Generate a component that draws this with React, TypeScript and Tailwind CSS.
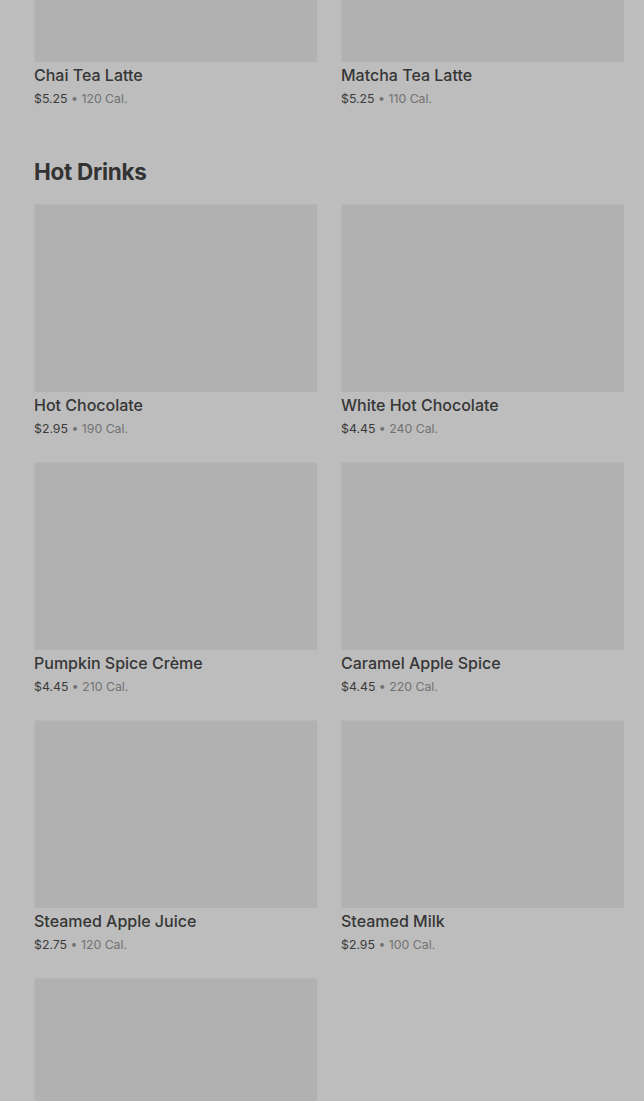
import React from "react";

type Item = { name: string; price: string; cal: string };

const top: Item[] = [
  { name: "Chai Tea Latte", price: "$5.25", cal: "120 Cal." },
  { name: "Matcha Tea Latte", price: "$5.25", cal: "110 Cal." },
];

const hot: Item[] = [
  { name: "Hot Chocolate", price: "$2.95", cal: "190 Cal." },
  { name: "White Hot Chocolate", price: "$4.45", cal: "240 Cal." },
  { name: "Pumpkin Spice Crème", price: "$4.45", cal: "210 Cal." },
  { name: "Caramel Apple Spice", price: "$4.45", cal: "220 Cal." },
  { name: "Steamed Apple Juice", price: "$2.75", cal: "120 Cal." },
  { name: "Steamed Milk", price: "$2.95", cal: "100 Cal." },
  { name: "Espresso", price: "$2.45", cal: "10 Cal." },
];

function Card({ item }: { item: Item }) {
  return (
    <div className="flex flex-col">
      <div className="h-[188px] bg-[#b1b1b1] border-t border-l border-[#b7b7b7]" />
      <div className="text-[16px] leading-[26px] font-medium text-[#363636] truncate">{item.name}</div>
      <div className="mt-[1px] text-[12.3px] leading-5 text-[#3b3b3b]">
        {item.price}
        <span className="text-[#727272]"> • {item.cal}</span>
      </div>
    </div>
  );
}

export default function App() {
  return (
    <div
      className="min-h-[1101px] bg-[#bdbdbd] pl-[34px] pr-[20px] pb-10"
      style={{ fontFamily: "Inter, 'Noto Sans', sans-serif" }}
    >
      <div className="-mt-[126px] grid grid-cols-2 gap-x-6 gap-y-[23px]">
        {top.map((it) => (
          <Card key={it.name} item={it} />
        ))}
      </div>
      <h2 className="mt-[47px] mb-[16px] text-[22.5px] leading-8 font-bold text-[#333333] tracking-[-0.3px]">
        Hot Drinks
      </h2>
      <div className="grid grid-cols-2 gap-x-6 gap-y-[23px]">
        {hot.map((it) => (
          <Card key={it.name} item={it} />
        ))}
      </div>
    </div>
  );
}
